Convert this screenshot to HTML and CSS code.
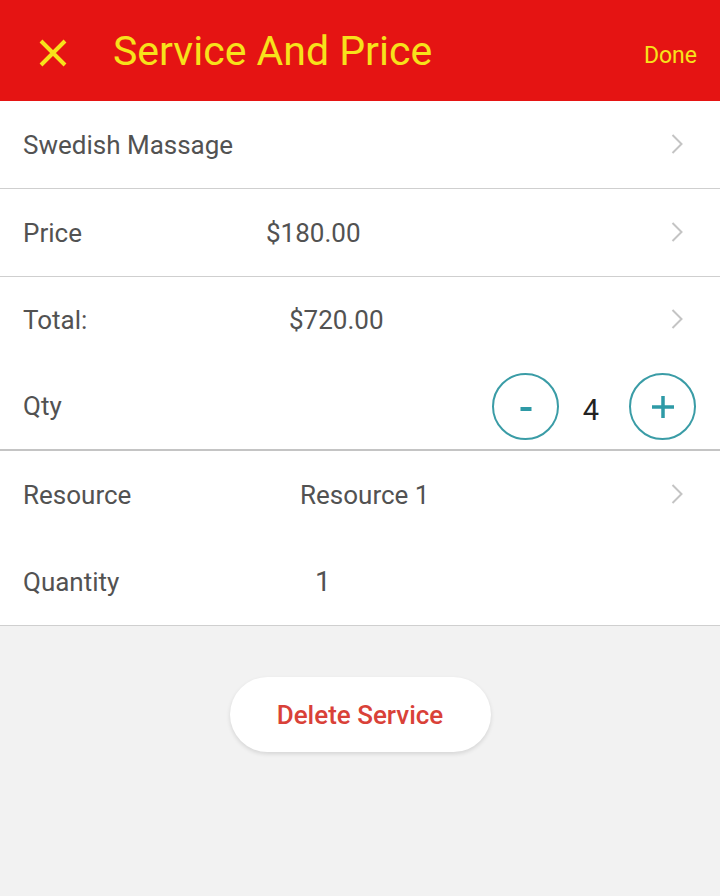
FILE: index.html
```html
<!DOCTYPE html>
<html lang="en">
<head>
  <meta charset="UTF-8">
  <title>Service And Price</title>
  <link rel="stylesheet" href="styles.css">
</head>
<body>

<div id="top-bar">
  <div class="close-btn">
    <svg width="30" height="28" viewBox="0 0 30 28">
      <path d="M3 2 L27 26 M27 2 L3 26" stroke="#f7e21b" stroke-width="4" fill="none"/>
    </svg>
  </div>
  <div class="title">Service And Price</div>
  <div class="done">Done</div>
</div>

<div class="group">
  <div class="row">
    <span class="label">Swedish Massage</span>
    <svg class="chevron" width="12" height="20" viewBox="0 0 12 20"><polyline points="1.5,1 10.5,10 1.5,19"/></svg>
  </div>
</div>

<div class="group">
  <div class="row">
    <span class="label">Price</span>
    <span class="value price-val">$180.00</span>
    <svg class="chevron" width="12" height="20" viewBox="0 0 12 20"><polyline points="1.5,1 10.5,10 1.5,19"/></svg>
  </div>
</div>

<div class="group thick">
  <div class="row short">
    <span class="label">Total:</span>
    <span class="value total-val">$720.00</span>
    <svg class="chevron" width="12" height="20" viewBox="0 0 12 20"><polyline points="1.5,1 10.5,10 1.5,19"/></svg>
  </div>
  <div class="row short">
    <span class="label">Qty</span>
    <div class="stepper">
      <button class="step-btn" aria-label="minus">
        <svg width="12" height="28" viewBox="0 0 12 28"><rect x="0.5" y="15" width="11" height="4"/></svg>
      </button>
      <span class="qty">4</span>
      <button class="step-btn" aria-label="plus">
        <svg width="22" height="28" viewBox="0 0 22 28"><path d="M0 15 H22 M11 4 V26"/></svg>
      </button>
    </div>
  </div>
</div>

<div class="group">
  <div class="row">
    <span class="label">Resource</span>
    <span class="value res-val">Resource 1</span>
    <svg class="chevron" width="12" height="20" viewBox="0 0 12 20"><polyline points="1.5,1 10.5,10 1.5,19"/></svg>
  </div>
  <div class="row">
    <span class="label">Quantity</span>
    <span class="value qty-val">1</span>
  </div>
</div>

<div class="actions">
  <button id="delete-btn">Delete Service</button>
</div>

</body>
</html>
```

FILE: styles.css
```css
body {
  margin: 0;
  font-family: Roboto, "Liberation Sans", sans-serif;
  background-color: #f2f2f2;
  height: 896px;
  overflow: hidden;
}

#top-bar {
  height: 101px;
  background-color: #e51413;
  color: #f7e21b;
  display: flex;
  align-items: center;
  padding: 0 23px 0 38px;
}

.close-btn {
  display: flex;
  margin-top: 4px;
}

.title {
  font-size: 41px;
  margin-left: 45px;
  flex-grow: 1;
}

.done {
  font-size: 23px;
  margin-top: 10px;
}

.group {
  background-color: #fff;
  border-bottom: 1px solid #cfcfcf;
}

.group.thick {
  border-bottom: 2px solid #c4c4c4;
}

.row {
  display: flex;
  align-items: center;
  height: 87px;
  padding: 0 24px 0 23px;
}

.row.short {
  height: 86px;
}

.label {
  font-size: 26px;
  color: #525252;
  width: 240px;
}

.value {
  font-size: 26px;
  color: #525252;
  flex-grow: 1;
}

.price-val { margin-left: 3px; }
.total-val { margin-left: 26px; }
.res-val { margin-left: 37px; }
.qty-val { margin-left: 52px; font-size: 28px; }

.chevron {
  margin-left: auto;
  margin-right: 13px;
  margin-top: -2px;
  fill: none;
  stroke: #c4c4c4;
  stroke-width: 2;
}

.stepper {
  margin-left: auto;
  display: flex;
  align-items: center;
}

.step-btn {
  width: 67px;
  height: 67px;
  border-radius: 50%;
  border: 2px solid #3a9ca6;
  background: #fff;
  padding: 0;
  display: flex;
  align-items: center;
  justify-content: center;
  cursor: pointer;
}

.step-btn svg {
  fill: #2e9aa6;
  stroke: #2e9aa6;
  stroke-width: 3.5;
}

.step-btn rect {
  stroke: none;
}

.qty {
  font-size: 29px;
  color: #222;
  width: 70px;
  text-align: center;
  margin-top: 8px;
  padding-right: 6px;
  box-sizing: border-box;
}

.actions {
  display: flex;
  justify-content: center;
  padding-top: 51px;
}

#delete-btn {
  width: 261px;
  height: 75px;
  border: none;
  border-radius: 38px;
  background-color: #fff;
  color: #d94138;
  font-family: Roboto, sans-serif;
  font-size: 26px;
  font-weight: 500;
  box-shadow: 0 2px 4px rgba(0, 0, 0, 0.12);
  cursor: pointer;
}
```
